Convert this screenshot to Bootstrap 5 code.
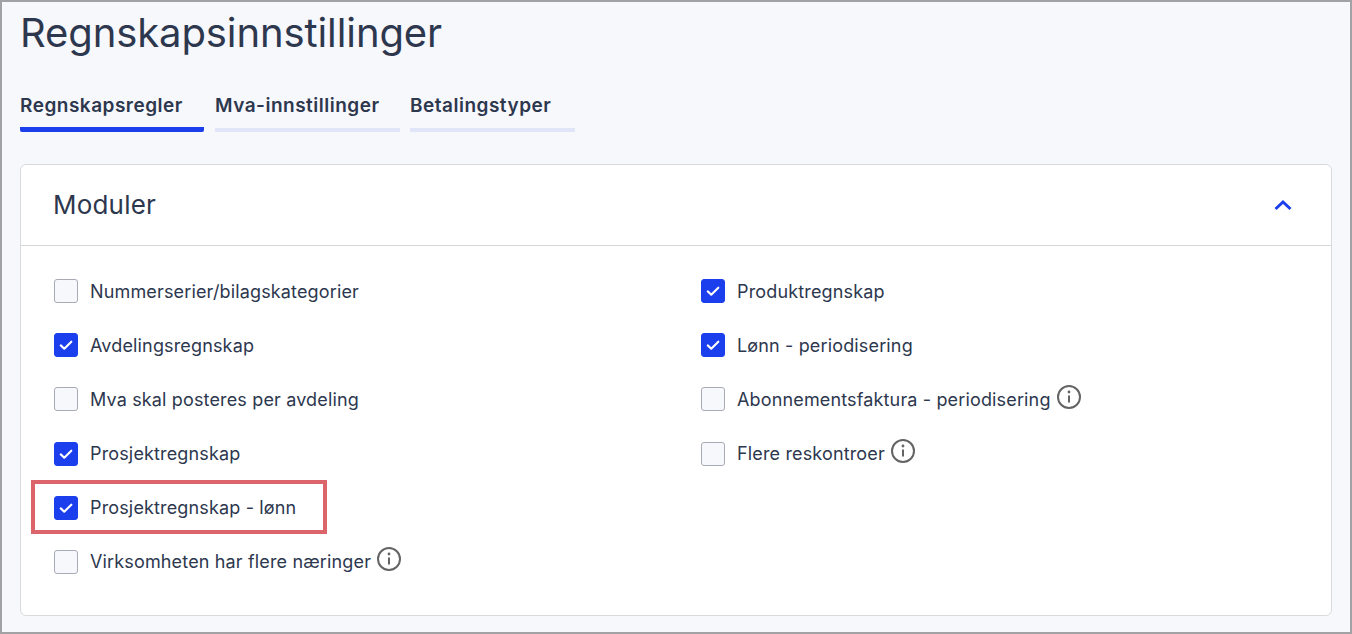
<!DOCTYPE html>
<html lang="no">
<head>
<meta charset="utf-8">
<title>Regnskapsinnstillinger</title>
<link href="https://cdn.jsdelivr.net/npm/bootstrap@5.3.0/dist/css/bootstrap.min.css" rel="stylesheet">
<style>
html,body{height:100%}
body{background:#f7f8fc;font-family:Inter,"Liberation Sans",sans-serif;color:#2d374e;overflow:hidden}
.frame{height:634px;border:2px solid #a2a2a4;padding:0 18px;overflow:hidden}
.page-title{font-size:40px;font-weight:400;line-height:46px;margin:8px 0 0;letter-spacing:-.1px;color:#2d374e}
.tabs-row{display:flex;margin-top:38px;gap:10px}
.tab-item{font-size:19px;font-weight:600;line-height:24px;letter-spacing:.5px;color:#2d374e;text-decoration:none;border-bottom:4px solid #e0e5f8;padding-bottom:10px;display:block;border-radius:1px;white-space:nowrap}
.tab-item.active-tab{border-bottom-width:5px;border-bottom-color:#1c3fee;padding-bottom:9px;border-radius:2px}
.t1{width:184px;margin-right:1px}.t2{width:185px}.t3{width:165px}
.panel{margin-top:32px;height:452px;border:1px solid #d9dade;border-radius:6px;background:#fff}
.panel-head{height:81px;padding:0 38px 0 32px;border-bottom:1px solid #d5d6da;display:flex;align-items:center;justify-content:space-between}
.panel-title{font-size:26px;font-weight:400;margin:0;letter-spacing:.2px;color:#2d374e}
.panel-body{display:flex;padding:33px 33px 0}
.col-left{width:647px}
.opt{position:relative;display:flex;align-items:center;height:24px;margin-bottom:30.2px;font-size:18px;letter-spacing:.15px;color:#2d374e;white-space:nowrap}
.opt .form-check-input{width:24px;height:24px;margin:0 12px 0 0;border:1px solid #a8abb5;border-radius:3px;background-color:#f7f8fc;flex:none}
.opt .form-check-input:checked{background-color:#1c3fee;border-color:#1c3fee;background-image:url("data:image/svg+xml,%3csvg xmlns='http://www.w3.org/2000/svg' viewBox='0 0 24 24'%3e%3cpath fill='none' stroke='%23fff' stroke-width='2.3' stroke-linecap='round' stroke-linejoin='round' d='M6.3 12.4l3.8 3.6 7.7-7.6'/%3e%3c/svg%3e");background-size:100% 100%}
.info-ic{width:26px;height:26px;margin-left:5px;margin-top:-5px;flex:none}
.red-box{position:absolute;left:-23px;top:-16px;width:296px;height:54px;border:4px solid #dc656b;pointer-events:none}
</style>
</head>
<body>
<div class="frame">
  <h1 class="page-title">Regnskapsinnstillinger</h1>
  <nav class="tabs-row">
    <a class="tab-item active-tab t1" href="#">Regnskapsregler</a>
    <a class="tab-item t2" href="#">Mva-innstillinger</a>
    <a class="tab-item t3" href="#">Betalingstyper</a>
  </nav>
  <section class="panel">
    <div class="panel-head">
      <h2 class="panel-title">Moduler</h2>
      <svg width="20" height="12" viewBox="0 0 20 12" fill="none" stroke="#1c3fee" stroke-width="3" aria-hidden="true"><path d="M2.5 10L10 3l7.5 7"/></svg>
    </div>
    <div class="panel-body">
      <div class="col-left">
        <label class="opt"><input class="form-check-input" type="checkbox">Nummerserier/bilagskategorier</label>
        <label class="opt"><input class="form-check-input" type="checkbox" checked>Avdelingsregnskap</label>
        <label class="opt"><input class="form-check-input" type="checkbox">Mva skal posteres per avdeling</label>
        <label class="opt"><input class="form-check-input" type="checkbox" checked>Prosjektregnskap</label>
        <label class="opt"><input class="form-check-input" type="checkbox" checked>Prosjektregnskap - lønn<span class="red-box"></span></label>
        <label class="opt"><input class="form-check-input" type="checkbox">Virksomheten har flere næringer<svg class="info-ic" viewBox="0 0 26 26" fill="none" aria-hidden="true"><circle cx="13" cy="13" r="11" stroke="#646464" stroke-width="2"/><circle cx="13" cy="8" r="1.4" fill="#646464"/><path d="M13 11.5v7" stroke="#646464" stroke-width="2"/></svg></label>
      </div>
      <div class="col-right">
        <label class="opt"><input class="form-check-input" type="checkbox" checked>Produktregnskap</label>
        <label class="opt"><input class="form-check-input" type="checkbox" checked>Lønn - periodisering</label>
        <label class="opt"><input class="form-check-input" type="checkbox">Abonnementsfaktura - periodisering<svg class="info-ic" viewBox="0 0 26 26" fill="none" aria-hidden="true"><circle cx="13" cy="13" r="11" stroke="#646464" stroke-width="2"/><circle cx="13" cy="8" r="1.4" fill="#646464"/><path d="M13 11.5v7" stroke="#646464" stroke-width="2"/></svg></label>
        <label class="opt"><input class="form-check-input" type="checkbox">Flere reskontroer<svg class="info-ic" viewBox="0 0 26 26" fill="none" aria-hidden="true"><circle cx="13" cy="13" r="11" stroke="#646464" stroke-width="2"/><circle cx="13" cy="8" r="1.4" fill="#646464"/><path d="M13 11.5v7" stroke="#646464" stroke-width="2"/></svg></label>
      </div>
    </div>
  </section>
</div>
<script src="https://cdn.jsdelivr.net/npm/bootstrap@5.3.0/dist/js/bootstrap.bundle.min.js"></script>
</body>
</html>
